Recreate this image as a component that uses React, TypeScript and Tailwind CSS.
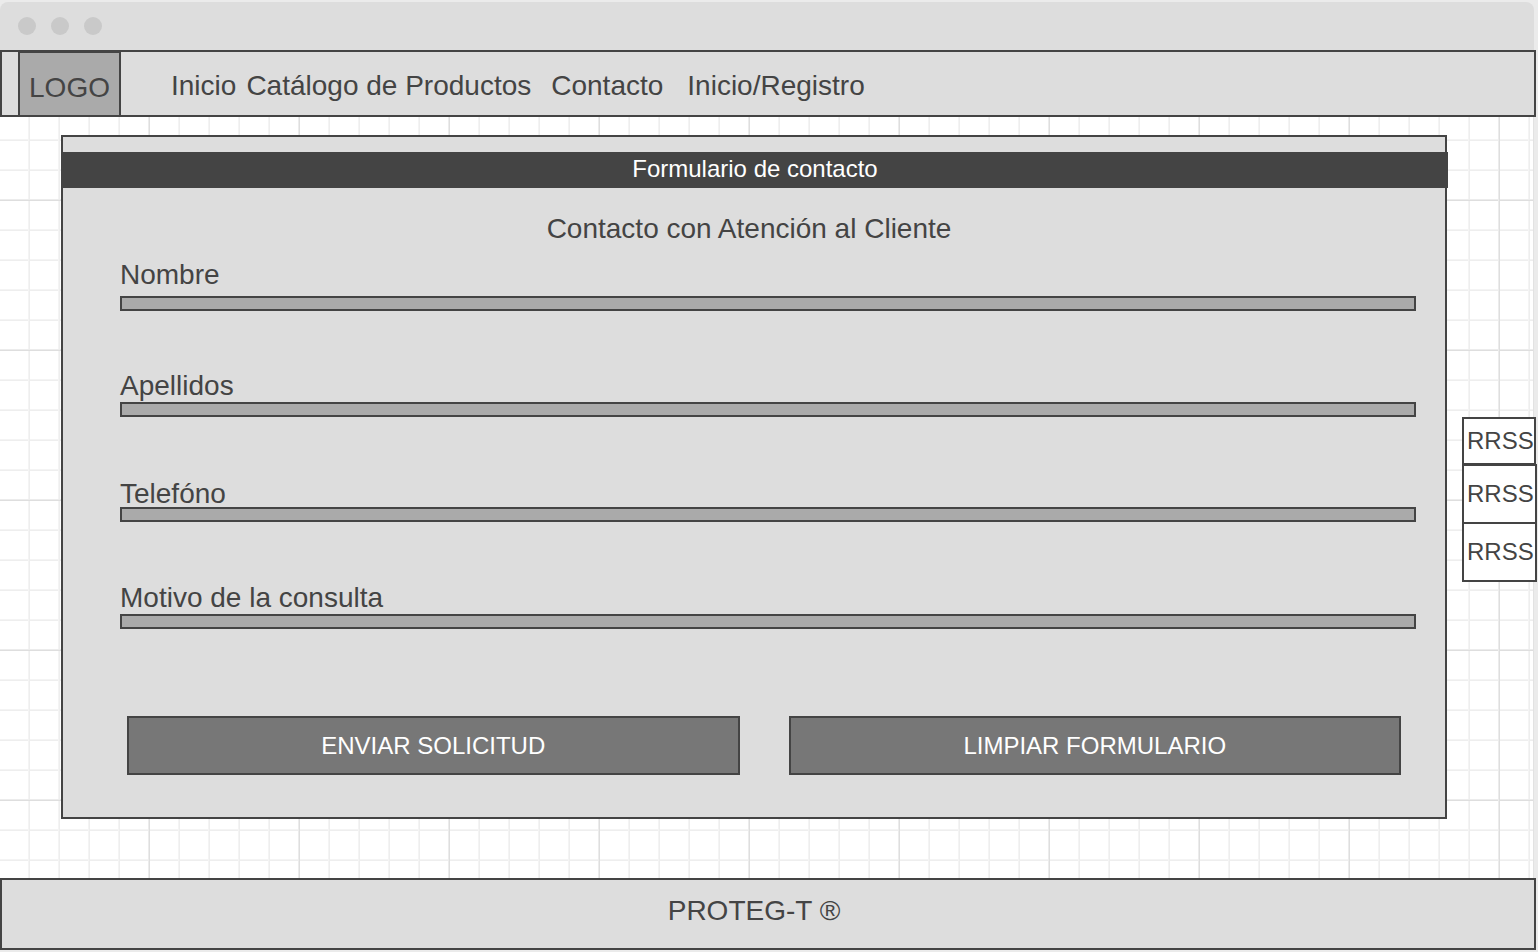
import React from "react";

const fields = [
  { id: "nombre", label: "Nombre", gap: "mt-[14px]", labelGap: "h-[37px]" },
  { id: "apellidos", label: "Apellidos", gap: "mt-[59px]", labelGap: "h-8" },
  { id: "telefono", label: "Telefóno", gap: "mt-[61px]", labelGap: "h-[29px]" },
  { id: "motivo", label: "Motivo de la consulta", gap: "mt-[60px]", labelGap: "h-8" },
];

const grid =
  "bg-[linear-gradient(to_left,#ebebeb_4px,#e2e2e2_4px,#e2e2e2_5px,transparent_5px),linear-gradient(to_right,#ececec_1px,#dedede_1px,#dedede_2px,transparent_2px),linear-gradient(to_bottom,#ececec_1px,#dedede_1px,#dedede_2px,transparent_2px),linear-gradient(to_right,#f4f4f4_1px,#eeeeee_1px,#eeeeee_2px,transparent_2px),linear-gradient(to_bottom,#f4f4f4_1px,#eeeeee_1px,#eeeeee_2px,transparent_2px)] bg-[size:100%_100%,150px_150px,150px_150px,30px_30px,30px_30px] bg-[position:0_0,148px_0,0_82px,28px_0,0_22px]";

export default function App() {
  return (
    <div className="flex min-h-screen flex-col bg-[#ebebeb] font-['Liberation_Sans',Arial,sans-serif] text-[28px] leading-8 text-[#444]">
      <div className="mt-0.5 mr-1 flex h-12 items-center gap-[15px] rounded-t-lg bg-[#ddd] pl-[18px]">
        <span className="size-[18px] rounded-full bg-[#c9c9c9]" />
        <span className="size-[18px] rounded-full bg-[#c9c9c9]" />
        <span className="size-[18px] rounded-full bg-[#c9c9c9]" />
      </div>

      <header className="mr-0.5 flex h-[67px] border-2 border-[#444] bg-[#ddd]">
        <a
          href="#inicio"
          className="-mt-px ml-4 flex w-[103px] items-center justify-center border-2 border-b-0 border-[#444] bg-[#aaa] pt-2"
        >
          LOGO
        </a>
        <nav className="ml-[50px] flex items-center pt-1">
          <a href="#inicio" className="mr-2.5">Inicio</a>
          <a href="#catalogo" className="mr-5">Catálogo de Productos</a>
          <a href="#contacto" className="mr-6">Contacto</a>
          <a href="#registro">Inicio/Registro</a>
        </nav>
      </header>

      <main className={"flex flex-1 items-start gap-[15px] bg-white pt-[18px] pb-[59px] pl-[61px] " + grid}>
        <section className="min-w-0 flex-1 border-2 border-[#444] bg-[#ddd] pt-[15px] pb-[42px]">
          <h1 className="-mr-[3px] -ml-px h-9 bg-[#444] text-center text-2xl leading-[34px] text-white">
            Formulario de contacto
          </h1>
          <form>
            <h2 className="mt-[25px] mr-2.5 text-center">Contacto con Atención al Cliente</h2>
            <div className="mr-[29px] ml-[57px]">
              {fields.map((f) => (
                <div key={f.id} className={"flex flex-col " + f.gap}>
                  <label htmlFor={f.id} className={f.labelGap}>
                    {f.label}
                  </label>
                  <input
                    id={f.id}
                    type="text"
                    className="h-[15px] w-full border-2 border-[#444] bg-[#aaa] px-1 text-[10px] leading-none outline-none"
                  />
                </div>
              ))}
            </div>
            <div className="mt-[87px] mr-11 ml-16 grid grid-cols-2 gap-[49px] text-2xl text-white">
              <button type="submit" className="h-[59px] border-2 border-[#444] bg-[#777]">
                ENVIAR SOLICITUD
              </button>
              <button type="reset" className="h-[59px] border-2 border-[#444] bg-[#777]">
                LIMPIAR FORMULARIO
              </button>
            </div>
          </form>
        </section>

        <aside className="mt-[282px] mr-px flex w-[75px] flex-col text-2xl">
          <a href="#rrss-1" className="mr-px flex h-12 items-center border-2 border-[#444] bg-white pl-[3px]">
            RRSS
          </a>
          <a href="#rrss-2" className="-mt-px flex h-[60px] items-center border-2 border-[#444] bg-white pl-[3px]">
            RRSS
          </a>
          <a href="#rrss-3" className="-mt-0.5 flex h-[60px] items-center border-2 border-[#444] bg-white pl-[3px]">
            RRSS
          </a>
        </aside>
      </main>

      <footer className="mr-0.5 mb-0.5 h-[72px] border-2 border-[#444] bg-[#ddd] pt-[15px] pr-7 text-center">
        PROTEG-T ®
      </footer>
    </div>
  );
}
